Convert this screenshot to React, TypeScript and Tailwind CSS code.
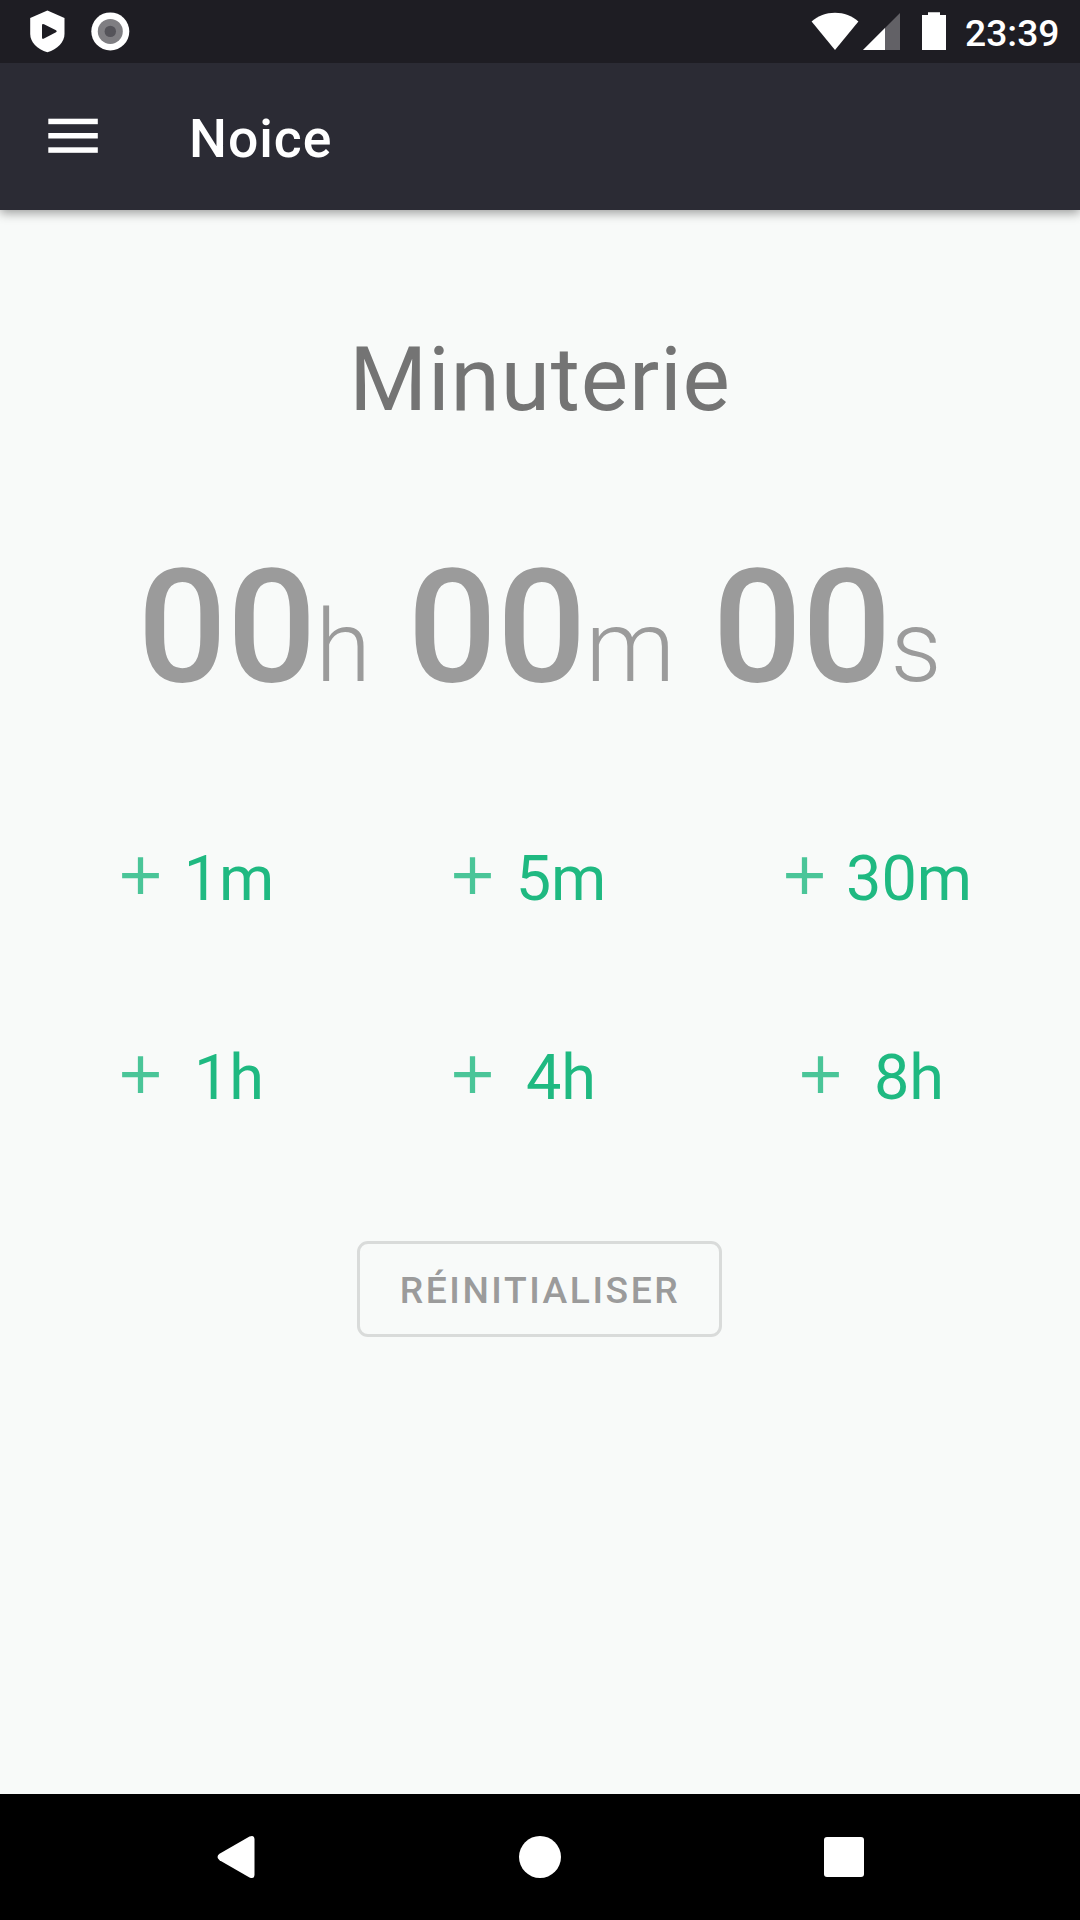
import React from "react";

const timerParts = [
  { value: "00", unit: "h", width: "w-[270px]" },
  { value: "00", unit: "m", width: "w-[305px]" },
  { value: "00", unit: "s", width: "w-[230px]" },
];

const presetRows = [
  ["1m", "5m", "30m"],
  ["1h", "4h", "8h"],
];

function StatusBar() {
  return (
    <div className="relative z-20 flex h-[63px] shrink-0 items-start justify-between bg-[#1e1d23] text-white">
      <svg width="160" height="63" viewBox="0 0 160 63">
        <path
          d="M47.4 10.500 64.500 18v16c0 8-7 15.500-17.100 18.200C37 49.500 30.200 42 30.200 34V18z"
          fill="#fff"
        />
        <path d="M42 25.300Q42 23.200 44 24.200L56 30.300Q57.600 31.300 56 32.300L44 38.600Q42 39.600 42 37.500z" fill="#1e1d23" />
        <circle cx="110.300" cy="31.400" r="19" fill="#fff" />
        <circle cx="110.300" cy="31.400" r="12.500" fill="#7f7e82" />
        <circle cx="110.300" cy="31.400" r="5.700" fill="#55545a" />
      </svg>
      <div className="flex h-[63px] items-start">
        <svg width="160" height="63" viewBox="800 0 160 63">
          <path d="M811.600 21.500C818 16 826 12.800 835 12.800S852 16 858.400 21.500L835 50z" fill="#fff" />
          <path d="M900 13v37H863z" fill="#626166" />
          <path d="M885 28v22H863z" fill="#fff" />
          <path d="M928 12.300h12V15h6v35h-24V15h6z" fill="#fff" />
        </svg>
        <span className="w-[120px] pl-[5px] pt-[2px] text-[37.25px] leading-[62px] font-medium whitespace-nowrap">
          23:39
        </span>
      </div>
    </div>
  );
}

function AppBar() {
  return (
    <header className="relative z-10 flex h-[147px] shrink-0 items-start bg-[#2b2b34] text-white shadow-[0_3px_10px_rgba(0,0,0,0.38)]">
      <button aria-label="Menu" className="ml-[48px] mt-[55px]">
        <svg width="50" height="36" viewBox="0 0 50 36" fill="#fff">
          <rect x="0.300" y="0.700" width="49.500" height="5.500" />
          <rect x="0.300" y="15" width="49.500" height="5.500" />
          <rect x="0.300" y="29.300" width="49.500" height="5.500" />
        </svg>
      </button>
      <h1 className="ml-[91px] mt-[46px] text-[53.5px] leading-[59px] font-medium tracking-[0.95px]">Noice</h1>
    </header>
  );
}

function PresetButton({ label }: { label: string }) {
  return (
    <button className="flex h-[63px] items-center justify-self-center text-[#1fb981]">
      <svg width="63" height="63" viewBox="0 0 24 24" fill="currentColor" opacity="0.8">
        <path d="M19 13h-6v6h-2v-6H5v-2h6V5h2v6h6z" />
      </svg>
      <span className="min-w-[114px] px-[10px] pt-[6px] text-center text-[63px] leading-[63px]">{label}</span>
    </button>
  );
}

function NavBar() {
  return (
    <nav className="flex h-[126px] shrink-0 items-center bg-black">
      <svg width="1080" height="126" viewBox="0 0 1080 126" fill="#fff">
        <path d="M249.500 42.500Q254.500 40.500 254.500 45.500V80.500Q254.500 85.500 249.500 83.500L219.500 66.200Q215.500 63 219.500 59.800z" />
        <circle cx="540" cy="63" r="21" />
        <rect x="824" y="43" width="40" height="40" rx="3" />
      </svg>
    </nav>
  );
}

export default function App() {
  return (
    <div className="flex h-[1920px] w-[1080px] flex-col overflow-hidden bg-[#f8faf9] font-['Roboto',sans-serif]">
      <StatusBar />
      <AppBar />
      <main className="flex flex-1 flex-col items-center">
        <h2 className="mt-[119px] text-[89.25px] leading-[101px] text-[#747474] tracking-[0.85px]">Minuterie</h2>
        <div className="mt-[107px] flex w-[805px] text-[#9b9b9b]">
          {timerParts.map((part) => (
            <div key={part.unit} className={part.width + " flex items-baseline text-[157.5px] leading-[180px]"}>
              <span className="font-medium">{part.value}</span>
              <span className="-ml-[1px] text-[101px] leading-none font-light">{part.unit}</span>
            </div>
          ))}
        </div>
        <div className="mt-[127px] flex w-[862px] flex-col gap-[136px]">
          {presetRows.map((row, i) => (
            <div key={i} className="-mr-[13px] grid grid-cols-[177px_177px_209px] items-center gap-x-[155px]">
              {row.map((label) => (
                <PresetButton key={label} label={label} />
              ))}
            </div>
          ))}
        </div>
        <button className="mt-[135px] mr-[1px] h-[96px] w-[365px] rounded-[11px] border-3 border-[#d9dbda] pt-[3px] pl-px text-[37.25px] font-medium tracking-[2.55px] text-[#9b9b9b]">
          RÉINITIALISER
        </button>
      </main>
      <NavBar />
    </div>
  );
}
